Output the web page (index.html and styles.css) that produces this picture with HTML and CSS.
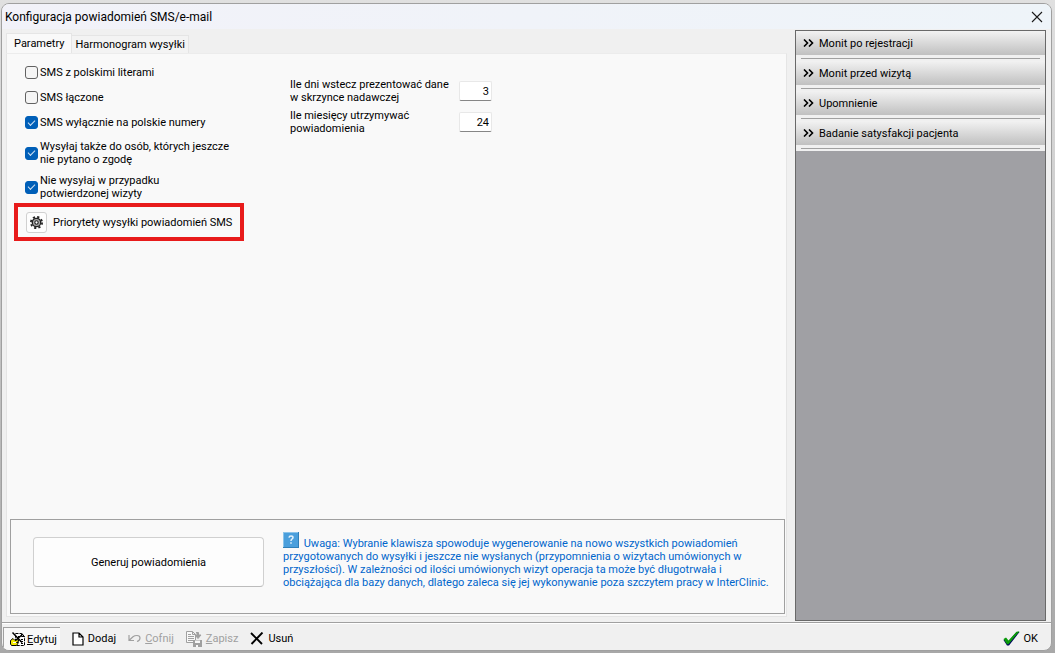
FILE: index.html
```
<!DOCTYPE html>
<html lang="pl">
<head>
    <meta charset="UTF-8">
    <meta name="viewport" content="width=device-width, initial-scale=1">
    <title>Konfiguracja powiadomień SMS/e-mail</title>
    <link rel="stylesheet" href="styles.css">
</head>
<body>
    <div class="window">
        <header class="titlebar">
            <h1>Konfiguracja powiadomień SMS/e-mail</h1>
            <button class="close-btn" type="button" aria-label="Zamknij">
                <svg width="12" height="12" viewBox="0 0 12 12"><path d="M1 1L11 11M11 1L1 11" stroke="#1a1a1a" stroke-width="1.1" fill="none"/></svg>
            </button>
        </header>

        <div class="content">
            <main class="config">
                <div class="tabs" role="tablist">
                    <button class="tab active" type="button" role="tab" aria-selected="true">Parametry</button>
                    <button class="tab" type="button" role="tab" aria-selected="false">Harmonogram wysyłki</button>
                </div>

                <div class="tab-page">
                    <div class="params">
                        <div class="options">
                            <label class="option"><input type="checkbox"><span>SMS z polskimi literami</span></label>
                            <label class="option"><input type="checkbox"><span>SMS łączone</span></label>
                            <label class="option"><input type="checkbox" checked><span>SMS wyłącznie na polskie numery</span></label>
                            <label class="option tall"><input type="checkbox" checked><span>Wysyłaj także do osób, których jeszcze<br>nie pytano o zgodę</span></label>
                            <label class="option tall"><input type="checkbox" checked><span>Nie wysyłaj w przypadku<br>potwierdzonej wizyty</span></label>
                            <div class="priority">
                                <button class="gear-btn" type="button" id="priorityBtn" aria-labelledby="priorityLabel">
                                    <svg width="13" height="13" viewBox="0 0 13 13">
                                        <circle cx="6.5" cy="6.5" r="5.6" fill="none" stroke="#222" stroke-width="1.8" stroke-dasharray="2.2 2.2"/>
                                        <circle cx="6.5" cy="6.5" r="4.2" fill="#aaa" stroke="#222" stroke-width="1.3"/>
                                        <circle cx="6.5" cy="6.5" r="1.7" fill="#fff" stroke="#222" stroke-width="1.1"/>
                                    </svg>
                                </button>
                                <label id="priorityLabel" for="priorityBtn">Priorytety wysyłki powiadomień SMS</label>
                            </div>
                        </div>

                        <div class="limits">
                            <label for="daysBack">Ile dni wstecz prezentować dane<br>w skrzynce nadawczej</label>
                            <input type="text" id="daysBack" value="3">
                            <label for="monthsKept">Ile miesięcy utrzymywać<br>powiadomienia</label>
                            <input type="text" id="monthsKept" value="24">
                        </div>
                    </div>

                    <section class="generate">
                        <button class="generate-btn" type="button">Generuj powiadomienia</button>
                        <p class="note"><svg class="help-icon" width="16" height="16" viewBox="0 0 16 16"><rect width="16" height="16" fill="#2f7fb8"/><rect width="15" height="15" fill="#8cc4ea"/><rect x="1" y="1" width="14" height="14" fill="#4a9fdc"/><path d="M6 5.6Q6.2 4 8 4Q10 4 10 5.6Q10 6.6 8.9 7.2Q8 7.7 8 9M8 10.2V11.8" fill="none" stroke="#e4f2fc" stroke-width="1.5"/></svg> Uwaga: Wybranie klawisza spowoduje wygenerowanie na nowo wszystkich powiadomień<br>przygotowanych do wysyłki i jeszcze nie wysłanych (przypomnienia o wizytach umówionych w<br>przyszłości). W zależności od ilości umówionych wizyt operacja ta może być długotrwała i<br>obciążająca dla bazy danych, dlatego zaleca się jej wykonywanie poza szczytem pracy w InterClinic.</p>
                    </section>
                </div>
            </main>

            <aside class="side-panel">
                <button class="side-item" type="button"><svg width="11" height="8" viewBox="0 0 11 8"><path d="M1 0.5L4.5 4L1 7.5M6 0.5L9.5 4L6 7.5" fill="none" stroke="#000" stroke-width="1.6"/></svg>Monit po rejestracji</button>
                <button class="side-item" type="button"><svg width="11" height="8" viewBox="0 0 11 8"><path d="M1 0.5L4.5 4L1 7.5M6 0.5L9.5 4L6 7.5" fill="none" stroke="#000" stroke-width="1.6"/></svg>Monit przed wizytą</button>
                <button class="side-item" type="button"><svg width="11" height="8" viewBox="0 0 11 8"><path d="M1 0.5L4.5 4L1 7.5M6 0.5L9.5 4L6 7.5" fill="none" stroke="#000" stroke-width="1.6"/></svg>Upomnienie</button>
                <button class="side-item" type="button"><svg width="11" height="8" viewBox="0 0 11 8"><path d="M1 0.5L4.5 4L1 7.5M6 0.5L9.5 4L6 7.5" fill="none" stroke="#000" stroke-width="1.6"/></svg>Badanie satysfakcji pacjenta</button>
            </aside>
        </div>

        <footer class="toolbar">
            <button class="tool pressed" type="button">
                <svg width="16" height="16" viewBox="0 0 16 16">
                    <path d="M5.5 2.5H11.5L14.5 5.5V14.5H5.5Z" fill="#fff" stroke="#000" stroke-dasharray="3 1"/>
                    <path d="M11.5 2.5V5.5H14.5M8 5.5H10M11 8.5H13M10 10.5H13M11 12.5H13" fill="none" stroke="#000"/>
                    <path d="M2.5 1.5L12 11.5M13 3L6 9" fill="none" stroke="#000" stroke-width="1.5"/>
                    <path d="M0.5 9.5L3 7.5L5 9.5L8.5 8.5V10.5L6.5 11.5H8.5L6.5 14.5H1.5L0.5 13Z" fill="#f5ea00" stroke="#000"/>
                    <path d="M3 11.5H6" stroke="#fff"/>
                </svg>
                <span><u>E</u>dytuj</span>
            </button>
            <button class="tool" type="button">
                <svg width="12" height="14" viewBox="0 0 12 14"><path d="M1 1H7L11 5V13H1ZM7 1V5H11" fill="#fff" stroke="#000" stroke-width="1.2"/></svg>
                <span>Dodaj</span>
            </button>
            <button class="tool" type="button" disabled>
                <svg width="13" height="9" viewBox="0 0 13 9"><path d="M1 1V6.5H6M1.5 6L5 2.8Q6.5 1.5 9 1.5Q12 1.5 12 4Q12 6.5 9 7.5" fill="none" stroke="#a0a0a0" stroke-width="1.2"/></svg>
                <span><u>C</u>ofnij</span>
            </button>
            <button class="tool" type="button" disabled>
                <svg width="16" height="16" viewBox="0 0 16 16">
                    <path d="M0.5 0.5H6.5L9.5 3.5V11.5H0.5ZM6.5 0.5V3.5H9.5M2 3.5H5M2 5.5H8M2 7.5H8M2 9.5H7" fill="#f8f8f8" stroke="#a0a0a0"/>
                    <path d="M10 1.5H12.5V4H15L12 7.5L9 4H11" fill="#a0a0a0" stroke="#a0a0a0"/>
                    <path d="M7 9H16V16H7Z" fill="#a0a0a0"/>
                    <path d="M9 9.5H14V12H9ZM10 14H12V16H10Z" fill="#f8f8f8"/>
                </svg>
                <span><u>Z</u>apisz</span>
            </button>
            <button class="tool" type="button">
                <svg width="14" height="13" viewBox="0 0 14 13"><path d="M1 1L12 12M12.5 0.5L1.5 12" fill="none" stroke="#000" stroke-width="1.9"/></svg>
                <span>Usuń</span>
            </button>
            <button class="tool ok" type="button">
                <svg width="17" height="15" viewBox="0 0 17 15"><path d="M0.5 9L3 7.5L5.5 10.5L13.5 1L16.5 1L6 14.5H4Z" fill="#000060"/><path d="M0.5 8L3 6.5L5.5 9.5L13.5 0.8L16.5 0.3L5.5 13.2H4Z" fill="#0a9a0a"/></svg>
                <span>OK</span>
            </button>
        </footer>
    </div>
</body>
</html>
```
FILE: styles.css
```
* {
    box-sizing: border-box;
}
body {
    margin: 0;
    min-height: 100vh;
    display: flex;
    padding: 3px 3px 2px 1px;
    background: linear-gradient(#e0e0e0, #c4c4c4 50%, #a8a8a8);
    font-family: Roboto, Tahoma, sans-serif;
    font-size: 11px;
    line-height: 13px;
    color: #000;
}
button, input {
    font: inherit;
    color: inherit;
    margin: 0;
}
button {
    padding: 0;
    border: none;
    background: none;
}
svg {
    flex: none;
}
.window {
    flex: 1;
    display: flex;
    flex-direction: column;
    border: 1px solid #a0a0a0;
    border-radius: 8px;
    background: #f0f0f0;
    overflow: hidden;
}
.titlebar {
    height: 25px;
    display: flex;
    align-items: center;
    justify-content: space-between;
    padding: 1px 8px 0 3px;
    background: linear-gradient(90deg, #f2f2f9, #eef4f9);
}
.titlebar h1 {
    margin: 0;
    font-size: 12px;
    font-weight: normal;
}
.close-btn {
    display: flex;
}
.content {
    flex: 1;
    display: flex;
    gap: 8px;
    padding: 1px 5px 1px 4px;
    border-bottom: 1px solid #a0a0a0;
}
.config {
    flex: 1;
    min-width: 0;
    display: flex;
    flex-direction: column;
    padding: 3px 0 4px;
}
.tabs {
    display: flex;
    align-items: flex-end;
}
.tab {
    height: 18px;
    padding: 0 3px;
    border: 1px solid #e5e5e5;
    border-bottom: none;
    border-left: none;
    background: #f3f3f3;
}
.tab.active {
    height: 20px;
    padding: 0 7px;
    border-left: 1px solid #e5e5e5;
    background: #f9f9f9;
}
.tab-page {
    flex: 1;
    display: flex;
    flex-direction: column;
    justify-content: space-between;
    padding: 6px 1px 2px 3px;
    border: 1px solid #e5e5e5;
    border-top-color: #ececec;
    background: #f9f9f9;
}
.params {
    display: flex;
    gap: 46px;
    padding-left: 4px;
}
.options {
    width: 230px;
}
.option {
    display: flex;
    align-items: center;
    gap: 2px;
    height: 25px;
    padding-left: 11px;
}
.option.tall {
    height: 34px;
    padding-top: 2px;
}
.option input {
    appearance: none;
    flex: none;
    width: 13px;
    height: 13px;
    margin: 0;
    border: 1px solid #626262;
    border-radius: 3px;
    background: #f5f5f5;
}
.option input:checked {
    border-color: #005fb8;
    background: #005fb8;
    display: grid;
    place-items: center;
}
.option input:checked::before {
    content: "";
    width: 6px;
    height: 3px;
    border-left: 1px solid #cfe2f3;
    border-bottom: 1px solid #cfe2f3;
    transform: translateY(-1px) rotate(-45deg);
}
.priority {
    display: flex;
    align-items: center;
    gap: 6px;
    height: 38px;
    padding-left: 8px;
    border: 4px solid #e81b1b;
    white-space: nowrap;
}
.gear-btn {
    width: 21px;
    height: 21px;
    display: flex;
    align-items: center;
    justify-content: center;
    border: 1px solid #d0d0d0;
    border-radius: 3px;
    background: #fdfdfd;
}
.limits {
    display: grid;
    grid-template-columns: 169px 33px;
    align-content: start;
    align-items: center;
    row-gap: 5px;
    padding-top: 18px;
}
.limits input {
    width: 33px;
    height: 20px;
    padding: 0 2px;
    border: 1px solid #e8e8e8;
    border-bottom-color: #868686;
    border-radius: 2px;
    background: #fff;
    text-align: right;
}
.generate {
    display: flex;
    align-items: flex-start;
    gap: 19px;
    padding: 12px 18px 24px 22px;
    border: 1px solid #a0a0a0;
}
.generate-btn {
    flex: none;
    width: 231px;
    height: 50px;
    margin-top: 5px;
    border: 1px solid #d0d0d0;
    border-bottom-color: #bcbcbc;
    border-radius: 4px;
    background: #fdfdfd;
}
.note {
    margin: 0;
    white-space: nowrap;
    color: #0066cc;
}
.help-icon {
    margin-right: 2px;
    vertical-align: -1px;
}
.side-panel {
    flex: none;
    width: 251px;
    border: 1px solid #696969;
    background: #a0a0a4;
}
.side-item {
    display: flex;
    align-items: center;
    gap: 5px;
    width: 100%;
    height: 30px;
    padding: 0 7px 6px;
    background: linear-gradient(#a0a0a0, #a0a0a0) 5px 27px / 239px 1px no-repeat,
        linear-gradient(#f2f2f2, #c0c0c0 24px, #f0f0f0 24px);
}
.toolbar {
    display: flex;
    align-items: center;
    height: 27px;
    padding: 3px 13px 0 1px;
    border-top: 1px solid #fff;
}
.tool {
    display: flex;
    align-items: center;
    gap: 4px;
    height: 23px;
    margin-left: 12px;
}
.tool:disabled {
    color: #a0a0a0;
}
.tool.pressed {
    gap: 1px;
    margin-left: 0;
    padding: 0 3px 0 6px;
    border-top: 1px solid #a0a0a0;
    border-left: 1px solid #a0a0a0;
    background: #f8f8f8;
}
.tool.ok {
    margin-left: auto;
}
```
